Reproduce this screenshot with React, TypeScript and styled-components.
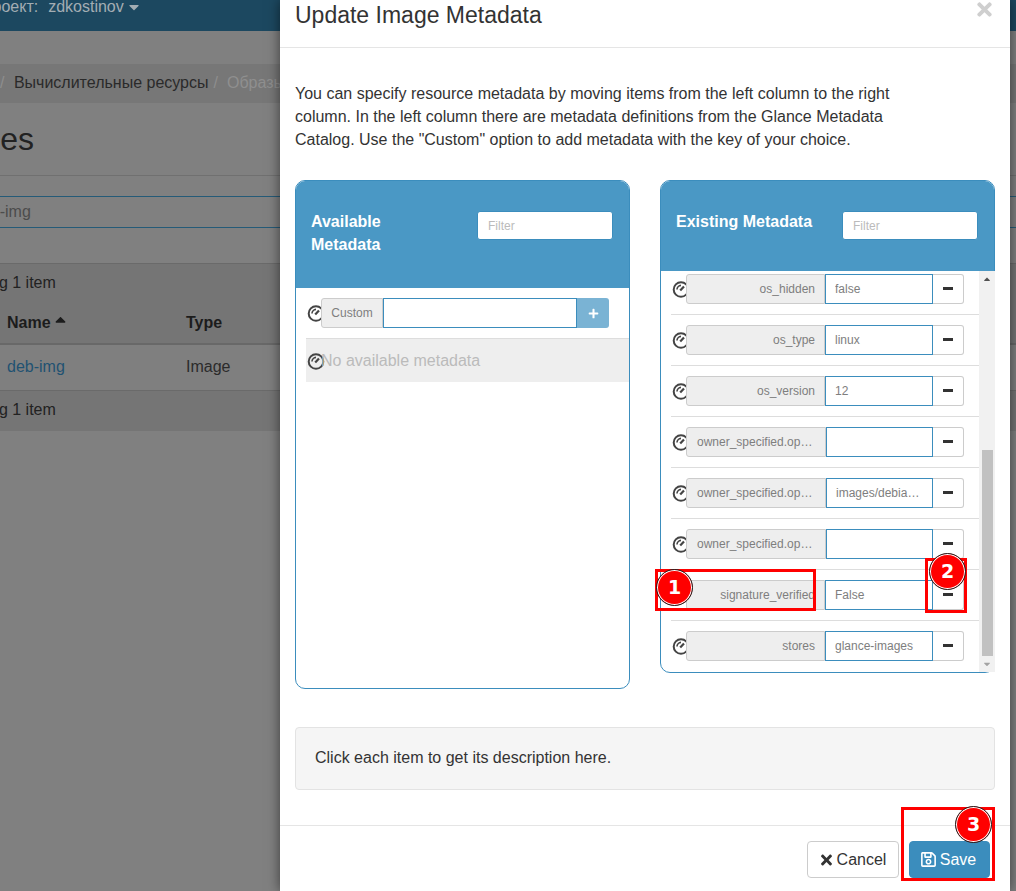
import React from "react";
import styled, { createGlobalStyle } from "styled-components";
import { FaTimes, FaPlus, FaRegSave, FaCaretDown, FaCaretUp } from "react-icons/fa";

const GlobalStyle = createGlobalStyle`
  html, body { margin: 0; padding: 0; }
  body { font-family: "Liberation Sans", Arial, sans-serif; background: #808080; }
  * { box-sizing: border-box; }
`;

const Screen = styled.div`
  position: relative;
  width: 1016px;
  height: 891px;
  overflow: hidden;
  background: #808080;
  color: #1a1a1a;
  font-size: 16px;
`;

/* dimmed page behind the dialog */
const NavBar = styled.div`
  height: 31px;
  background: #1c4860;
  color: #a3adb3;
  display: flex;
  align-items: center;
  padding-bottom: 17px;
  gap: 7px;
  line-height: 14px;
`;

const NavProject = styled.span`
  margin-left: -19px;
`;

const NavUser = styled.span`
  display: flex;
  align-items: center;
  gap: 2px;
  margin-left: 3px;
`;

const Breadcrumb = styled.div`
  margin-top: 33px;
  height: 39px;
  padding-bottom: 2px;
  background: #777;
  display: flex;
  align-items: center;
  gap: 5px;
  white-space: nowrap;
  color: #2a2a2a;
`;

const CrumbDivider = styled.span`
  color: #8e8e8e;
`;

const CrumbMuted = styled.span`
  color: #8f8f8f;
  margin-left: 4px;
`;

const PageTitle = styled.h1`
  margin: 0;
  height: 73px;
  border-bottom: 1px solid #707070;
  font-size: 32px;
  font-weight: 400;
  line-height: 72px;
  color: #222;
  white-space: nowrap;
  text-indent: -71px;
`;

const SearchField = styled.div`
  margin-top: 20px;
  height: 32px;
  border-top: 1px solid #255b78;
  border-bottom: 1px solid #255b78;
  font-size: 16px;
  line-height: 29px;
  color: #4c4c4c;
  white-space: nowrap;
  text-indent: -27px;
`;

const TableSection = styled.div`
  margin-top: 35px;
`;

const TableBar = styled.div<{ $h: number }>`
  height: ${p => p.$h}px;
  background: #757575;
  border-top: 1px solid #6a6a6a;
  line-height: 37px;
  text-indent: -66px;
  white-space: nowrap;
  color: #222;
`;

const TableRow = styled.div<{ $head?: boolean }>`
  display: grid;
  grid-template-columns: 179px 1fr;
  padding-left: 7px;
  padding-bottom: ${p => (p.$head ? 0 : 2)}px;
  height: ${p => (p.$head ? 43 : 45)}px;
  align-items: center;
  background: ${p => (p.$head ? "#757575" : "#7f7f7f")};
  border-bottom: ${p => (p.$head ? "2px solid #686868" : "none")};
  font-weight: ${p => (p.$head ? 700 : 400)};
  color: ${p => (p.$head ? "#1c1c1c" : "#2b2b2b")};
`;

const SortLabel = styled.span`
  display: flex;
  align-items: center;
  gap: 1px;
`;

const SortCaret = styled(FaCaretUp)`
  width: 17px;
  height: 17px;
  margin-top: -7px;
`;

const PageLink = styled.span`
  color: #1f5272;
`;

/* dialog */
const Dialog = styled.div`
  position: absolute;
  left: 280px;
  top: 0;
  width: 730px;
  height: 891px;
  background: #fff;
  box-shadow: 0 0 12px rgba(0, 0, 0, 0.55);
  color: #333;
`;

const DialogHeader = styled.div`
  height: 48px;
  border-bottom: 1px solid #e5e5e5;
  padding: 0 15px;
  display: flex;
  justify-content: space-between;
`;

const DialogTitle = styled.h4`
  margin: 0;
  font-size: 23px;
  font-weight: 400;
  line-height: 30px;
`;

const CloseIcon = styled(FaTimes)`
  color: #cfcfcf;
  font-size: 21px;
  margin-top: -1px;
`;

const DialogBody = styled.div`
  padding: 34px 15px 0;
`;

const Intro = styled.p`
  margin: 0;
  width: 610px;
  font-size: 16px;
  line-height: 23px;
`;

const Columns = styled.div`
  display: flex;
  align-items: flex-start;
  gap: 30px;
  margin-top: 29px;
`;

const Column = styled.div<{ $h: number }>`
  width: 335px;
  height: ${p => p.$h}px;
  border: 1px solid #3b8dbd;
  border-radius: 10px;
`;

const ColumnHeader = styled.div<{ $h: number }>`
  height: ${p => p.$h}px;
  background: #4a98c5;
  border-radius: 9px 9px 0 0;
  padding: 29px 16px 0 15px;
  display: flex;
  justify-content: space-between;
  align-items: flex-start;
`;

const ColumnTitle = styled.div<{ $single?: boolean }>`
  width: 130px;
  font-size: 16px;
  font-weight: 700;
  line-height: 23px;
  color: #fff;
  white-space: ${p => (p.$single ? "nowrap" : "normal")};
`;

const FilterInput = styled.input`
  width: 136px;
  height: 29px;
  margin-top: 1px;
  border: 1px solid #3b8dbd;
  border-radius: 3px;
  padding: 0 10px;
  font: 12px "Liberation Sans", Arial, sans-serif;
  background: #fff;
  &::placeholder { color: #bbb; opacity: 1; }
`;

const CustomRow = styled.div`
  display: flex;
  align-items: center;
  padding: 10px 0 10px 11px;
`;

const GaugeSvg = styled.svg`
  width: 18px;
  height: 18px;
  flex: none;
  margin-right: -4px;
`;

const Gauge = () => (
  <GaugeSvg viewBox="0 0 18 18" fill="none" stroke="#444">
    <circle cx="9" cy="9.5" r="7.3" strokeWidth="2" />
    <path d="M5 9.6a4.2 4.2 0 0 1 4-4.2" strokeWidth="1.6" />
    <path d="M8.2 10.4L12 6.4" strokeWidth="2.2" />
  </GaugeSvg>
);

const InputGroup = styled.div`
  position: relative;
  display: flex;
  height: 30px;
`;

const KeyLabel = styled.div<{ $w: number; $center?: boolean }>`
  width: ${p => p.$w}px;
  flex: none;
  background: #eee;
  border: 1px solid #ccc;
  border-radius: 3px 0 0 3px;
  padding: ${p => (p.$center ? "0" : "0 9px 0 10px")};
  font-size: 12px;
  line-height: 28px;
  color: #7e7e7e;
  text-align: ${p => (p.$center ? "center" : "right")};
  white-space: nowrap;
  overflow: hidden;
  text-overflow: ellipsis;
`;

const ValueInput = styled.input`
  flex: 1;
  min-width: 0;
  height: 30px;
  border: 1px solid #3b8dbd;
  padding: 0 9px;
  background: #fff;
  color: #7e7e7e;
  font: 12px "Liberation Sans", Arial, sans-serif;
  text-overflow: ellipsis;
  outline: none;
`;

const CustomInput = styled(ValueInput)`
  flex: none;
  width: 194px;
`;

const AddButton = styled.div`
  width: 32px;
  background: #7ab3d4;
  border-radius: 0 3px 3px 0;
  color: #fff;
  display: flex;
  align-items: center;
  justify-content: center;
  font-size: 11px;
`;

const RemoveButton = styled.div`
  width: 31px;
  flex: none;
  background: #fff;
  border: 1px solid #ccc;
  border-left: none;
  border-radius: 0 3px 3px 0;
  display: flex;
  align-items: center;
  justify-content: center;
  &::before {
    content: "";
    width: 10px;
    height: 3px;
    background: #333;
    margin-top: -1px;
  }
`;

const EmptyRow = styled.div`
  margin-left: 10px;
  height: 44px;
  border-top: 1px solid #ddd;
  background: #eee;
  display: flex;
  align-items: center;
  padding-left: 1px;
  font-size: 16px;
  color: #bbb;
`;

const ExistingBody = styled.div`
  display: flex;
  height: 401px;
`;

const RowList = styled.div`
  flex: 1;
  min-width: 0;
  overflow: hidden;
  padding-left: 10px;
`;

const RowStack = styled.div`
  margin-top: -7px;
`;

const MetaRow = styled.div`
  display: flex;
  align-items: flex-start;
  height: 51px;
  padding: 10px 0 0 1px;
  border-bottom: 1px solid #ddd;
  &:last-child { border-bottom: none; }
  ${GaugeSvg} { margin-top: 6px; }
`;

const MetaGroup = styled(InputGroup)`
  width: 278px;
`;

const Track = styled.div`
  width: 16px;
  flex: none;
  margin-right: -1px;
  background: #f1f1f1;
  display: flex;
  flex-direction: column;
  align-items: center;
  font-size: 10px;
  color: #505050;
`;

const TrackArrow = styled.div<{ $color?: string }>`
  height: 16px;
  display: flex;
  align-items: center;
  justify-content: center;
  color: ${p => p.$color || "#505050"};
`;

const TrackThumb = styled.div`
  width: 11px;
  height: 206px;
  margin-top: 163px;
  background: #c1c1c1;
`;

const Description = styled.div`
  margin-top: 38px;
  height: 63px;
  background: #f5f5f5;
  border: 1px solid #e3e3e3;
  border-radius: 4px;
  padding: 0 19px;
  font-size: 16px;
  line-height: 59px;
`;

const DialogFooter = styled.div`
  margin-top: 35px;
  border-top: 1px solid #e5e5e5;
  padding: 15px 20px 0 0;
  display: flex;
  justify-content: flex-end;
  gap: 10px;
`;

const Button = styled.div<{ $primary?: boolean }>`
  height: 37px;
  width: ${p => (p.$primary ? 81 : 92)}px;
  border: 1px solid ${p => (p.$primary ? "#3a8cbc" : "#ccc")};
  border-radius: 4px;
  background: ${p => (p.$primary ? "#3b8dbd" : "#fff")};
  color: ${p => (p.$primary ? "#fff" : "#333")};
  display: flex;
  align-items: center;
  justify-content: center;
  gap: 4px;
  font-size: 16px;
`;

const CancelIcon = styled(FaTimes)`
  width: 13px;
  height: 16px;
`;

const SaveIcon = styled(FaRegSave)`
  width: 15px;
  height: 17px;
  margin-left: -2px;
`;

/* red markers drawn over the screenshot */
const MarkBox = styled.div<{ $x: number; $y: number; $w: number; $h: number }>`
  position: absolute;
  left: ${p => p.$x}px;
  top: ${p => p.$y}px;
  width: ${p => p.$w}px;
  height: ${p => p.$h}px;
  border: 3px solid #f00;
`;

const MarkBadge = styled.div<{ $x: number; $y: number }>`
  position: absolute;
  left: ${p => p.$x}px;
  top: ${p => p.$y}px;
  width: 37px;
  height: 37px;
  border-radius: 50%;
  background: #f00;
  border: 1px solid #222;
  box-shadow: inset 0 0 0 1px #fff;
  color: #fff;
  font: 700 19px/35px "DejaVu Sans", sans-serif;
  text-align: center;
`;

const rows = [
  { key: "os_hidden", value: "false", w: 139 },
  { key: "os_type", value: "linux", w: 139 },
  { key: "os_version", value: "12", w: 139 },
  { key: "owner_specified.openstack.md5", value: "", w: 140 },
  { key: "owner_specified.openstack.object", value: "images/debian-12-generic", w: 140 },
  { key: "owner_specified.openstack.sha256", value: "", w: 140 },
  { key: "signature_verified", value: "False", w: 139 },
  { key: "stores", value: "glance-images", w: 139 },
];

export default function App() {
  return (
    <Screen>
      <GlobalStyle />
      <NavBar>
        <NavProject>Проект:</NavProject>
        <NavUser>zdkostinov <FaCaretDown size={16} /></NavUser>
      </NavBar>
      <Breadcrumb>
        <CrumbDivider>/</CrumbDivider>
        <span>&nbsp;Вычислительные ресурсы</span>
        <CrumbDivider>/</CrumbDivider>
        <CrumbMuted>Образы</CrumbMuted>
      </Breadcrumb>
      <PageTitle>Images</PageTitle>
      <SearchField>deb-img</SearchField>
      <TableSection>
        <TableBar $h={39}>Displaying 1 item</TableBar>
        <TableRow $head>
          <SortLabel>Name <SortCaret /></SortLabel>
          <span>Type</span>
        </TableRow>
        <TableRow>
          <PageLink>deb-img</PageLink>
          <span>Image</span>
        </TableRow>
        <TableBar $h={41}>Displaying 1 item</TableBar>
      </TableSection>

      <Dialog>
        <DialogHeader>
          <DialogTitle>Update Image Metadata</DialogTitle>
          <CloseIcon />
        </DialogHeader>
        <DialogBody>
          <Intro>
            You can specify resource metadata by moving items from the left column to the right
            column. In the left column there are metadata definitions from the Glance Metadata
            Catalog. Use the "Custom" option to add metadata with the key of your choice.
          </Intro>
          <Columns>
            <Column $h={509}>
              <ColumnHeader $h={107}>
                <ColumnTitle>Available Metadata</ColumnTitle>
                <FilterInput placeholder="Filter" readOnly />
              </ColumnHeader>
              <CustomRow>
                <Gauge />
                <InputGroup>
                  <KeyLabel $w={62} $center>Custom</KeyLabel>
                  <CustomInput readOnly />
                  <AddButton><FaPlus /></AddButton>
                </InputGroup>
              </CustomRow>
              <EmptyRow>
                <Gauge />
                <span>No available metadata</span>
              </EmptyRow>
            </Column>
            <Column $h={493}>
              <ColumnHeader $h={90}>
                <ColumnTitle $single>Existing Metadata</ColumnTitle>
                <FilterInput placeholder="Filter" readOnly />
              </ColumnHeader>
              <ExistingBody>
                <RowList>
                  <RowStack>
                    {rows.map(row => (
                      <MetaRow key={row.key}>
                        <Gauge />
                        <MetaGroup>
                          <KeyLabel $w={row.w}>{row.key}</KeyLabel>
                          <ValueInput value={row.value} readOnly />
                          <RemoveButton />
                        </MetaGroup>
                      </MetaRow>
                    ))}
                  </RowStack>
                </RowList>
                <Track>
                  <TrackArrow><FaCaretUp /></TrackArrow>
                  <TrackThumb />
                  <TrackArrow $color="#a3a3a3"><FaCaretDown /></TrackArrow>
                </Track>
              </ExistingBody>
            </Column>
          </Columns>
          <Description>Click each item to get its description here.</Description>
        </DialogBody>
        <DialogFooter>
          <Button><CancelIcon /> Cancel</Button>
          <Button $primary><SaveIcon /> Save</Button>
        </DialogFooter>
      </Dialog>

      <MarkBox $x={655} $y={569} $w={161} $h={42} />
      <MarkBox $x={925} $y={558} $w={42} $h={55} />
      <MarkBox $x={901} $y={807} $w={94} $h={74} />
      <MarkBadge $x={656} $y={569}>1</MarkBadge>
      <MarkBadge $x={929} $y={553}>2</MarkBadge>
      <MarkBadge $x={955} $y={806}>3</MarkBadge>
    </Screen>
  );
}
